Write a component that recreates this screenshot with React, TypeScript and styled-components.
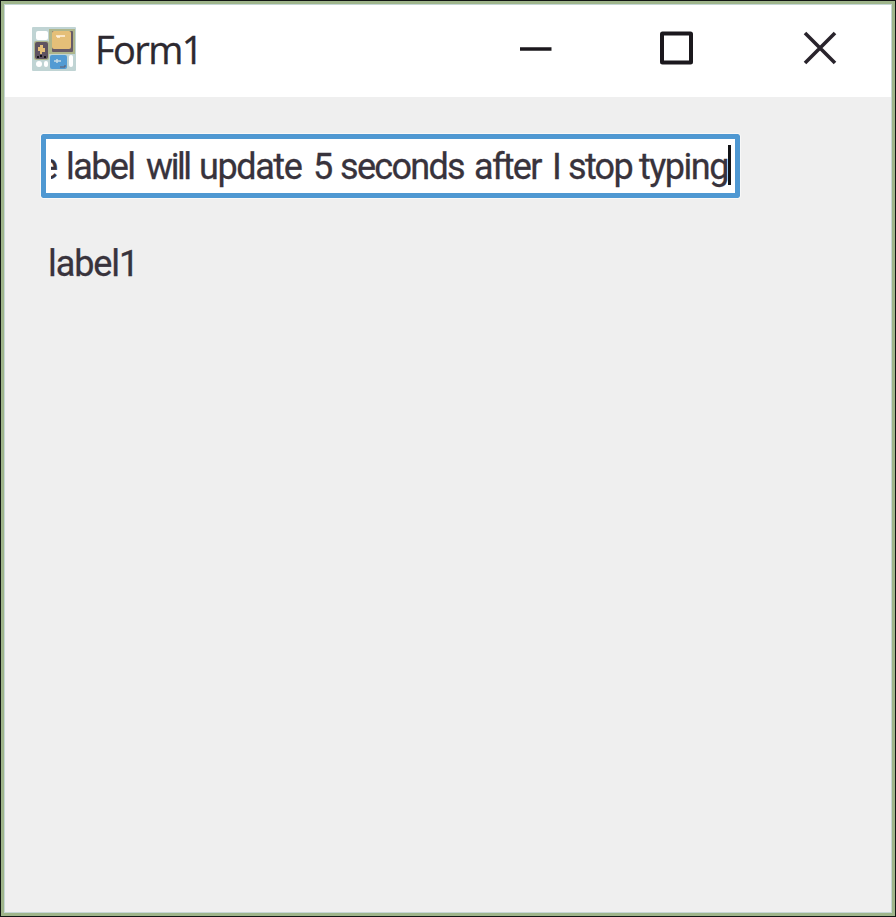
import React from "react";
import styled, { createGlobalStyle } from "styled-components";

const GlobalStyle = createGlobalStyle`
  * { box-sizing: border-box; }
  body { margin: 0; background: #efefef; }
`;

const Window = styled.main`
  display: flex;
  flex-direction: column;
  width: 896px;
  height: 917px;
  border: 1px solid #121614;
  background: #9fb58b;
  padding: 3px;
`;

const Surface = styled.div`
  flex: 1;
  display: flex;
  flex-direction: column;
  border: 1px solid #c5d6d5;
  background: #efefef;
`;

const TitleBar = styled.header`
  display: flex;
  align-items: flex-start;
  height: 92px;
  background: #fff;
  padding: 20px 0 0 26px;
`;

const Title = styled.h1`
  flex: 1;
  margin: 0 0 0 18px;
  font: 400 38px/48px "Open Sans", sans-serif;
  letter-spacing: -1.6px;
  color: #2d2930;
  -webkit-text-stroke: 0.3px #2d2930;
`;

const Controls = styled.div`
  display: flex;
  gap: 107px;
  padding: 4px 53px 0 0;
`;

const ControlButton = styled.button`
  display: block;
  width: 36px;
  height: 38px;
  padding: 0;
  border: 0;
  background: transparent;
  svg { display: block; }
`;

const Body = styled.section`
  display: flex;
  flex-direction: column;
  align-items: flex-start;
  padding: 37px 0 0 36px;
`;

const TextBox = styled.div`
  display: flex;
  justify-content: flex-end;
  width: 699px;
  height: 64px;
  border: 5px solid #4f98d2;
  border-radius: 2px;
  background: #fff;
  padding: 0 4px 0 5px;
  outline: 1px solid #f8f8f8;
`;

const Clip = styled.div`
  flex: 1;
  display: flex;
  justify-content: flex-end;
  overflow: hidden;
`;

const Words = styled.span`
  display: flex;
  font: 400 36px/56px Roboto, sans-serif;
  color: #38333c;
  white-space: pre;
  -webkit-text-stroke: 0.3px #38333c;
`;

const Word = styled.span<{ $width: number; $spacing: number }>`
  flex: none;
  width: ${(p) => p.$width}px;
  letter-spacing: ${(p) => p.$spacing}px;
`;

const Caret = styled.span`
  flex: none;
  width: 3px;
  height: 40px;
  margin: 6px 0 0 -3px;
  background: #121316;
`;

const Label = styled.div`
  margin: 39px 0 0 7px;
  font: 400 36px/54px Roboto, sans-serif;
  letter-spacing: -1.1px;
  color: #38333c;
  -webkit-text-stroke: 0.3px #38333c;
`;

const words = [
  { text: "e ", width: 27, spacing: -1 },
  { text: "label ", width: 80, spacing: -1.6 },
  { text: "will ", width: 53, spacing: -2.4 },
  { text: "update ", width: 114, spacing: -1.4 },
  { text: "5 ", width: 27, spacing: -1 },
  { text: "seconds ", width: 134, spacing: -1.7 },
  { text: "after ", width: 78, spacing: -1.7 },
  { text: "I ", width: 16, spacing: -1 },
  { text: "stop ", width: 71, spacing: -1.7 },
  { text: "typing", width: 92, spacing: -1.5 },
];

const FormIcon = () => (
  <svg width="46" height="48" viewBox="31 24 46 48">
    <rect x="32" y="26" width="44" height="44" rx="1" fill="#c0d4d4" />
    <rect x="36" y="30" width="12" height="9" rx="2" fill="#fff" />
    <rect x="49" y="28" width="26" height="25" fill="#aeb58b" />
    <rect x="52" y="30" width="21" height="21" rx="1" fill="#665a68" />
    <rect x="52" y="30" width="19" height="18" rx="2" fill="#e5bf78" />
    <path d="M56 35h9M57 36h3" stroke="#fff4df" strokeWidth="1.5" />
    <rect x="34" y="40" width="15" height="19" rx="2" fill="#aeb58b" />
    <rect x="35" y="41" width="13" height="17" rx="2" fill="#5f5360" />
    <path d="M40 44h3v3h2v4h-3v2h-2v-3h-2v-4h2z" fill="#e5bf78" />
    <path d="M37 56h2m1-1h2m2 1h2" stroke="#171519" strokeWidth="2" />
    <rect x="36" y="60" width="6" height="6" rx="3" fill="#fff" />
    <rect x="44" y="60" width="4" height="6" rx="2" fill="#fff" />
    <rect x="50" y="54" width="17" height="14" rx="2" fill="#529bd3" />
    <path d="M54 60h7m-4-2v4" stroke="#c5dce6" strokeWidth="1.5" />
    <path d="M60 66h5v-2" fill="none" stroke="#665a68" />
    <rect x="69" y="54" width="4" height="12" rx="2" fill="#fff" />
  </svg>
);

export default function App() {
  return (
    <>
      <GlobalStyle />
      <Window>
        <Surface>
          <TitleBar>
            <FormIcon />
            <Title>Form1</Title>
            <Controls>
              <ControlButton aria-label="Minimize">
                <svg width="36" height="38" viewBox="516 29 36 38">
                  <path d="M520 49h31.500" stroke="#1b181d" strokeWidth="3.500" />
                </svg>
              </ControlButton>
              <ControlButton aria-label="Maximize">
                <svg width="36" height="38" viewBox="659 29 36 38">
                  <rect x="662" y="33.500" width="29" height="29" rx="0.500" fill="none" stroke="#1b181d" strokeWidth="4" />
                </svg>
              </ControlButton>
              <ControlButton aria-label="Close">
                <svg width="36" height="38" viewBox="802 29 36 38">
                  <path d="M805 33l30 30M835 33l-30 30" stroke="#29242c" strokeWidth="3.600" />
                </svg>
              </ControlButton>
            </Controls>
          </TitleBar>
          <Body>
            <TextBox>
              <Clip>
                <Words>
                  {words.map((w) => (
                    <Word key={w.text} $width={w.width} $spacing={w.spacing}>{w.text}</Word>
                  ))}
                </Words>
              </Clip>
              <Caret />
            </TextBox>
            <Label>label1</Label>
          </Body>
        </Surface>
      </Window>
    </>
  );
}
